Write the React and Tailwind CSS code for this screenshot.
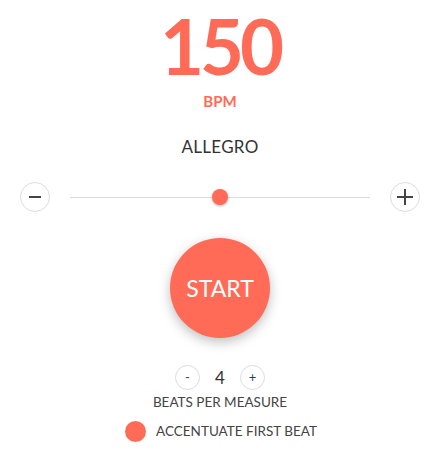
import React, { useState } from 'react';

const font = { fontFamily: '"Lato", "Open Sans", sans-serif' };

const App = () => {
  const [bpm, setBpm] = useState(150);
  const [beats, setBeats] = useState(4);
  const [accent, setAccent] = useState(true);

  const pct = ((bpm - 40) / (260 - 40)) * 100;

  return (
    <div className="w-[440px] h-[450px] bg-white flex flex-col items-center text-[#333]" style={font}>
      <div className="text-[76px] leading-[92px] font-bold text-[#ff6b57] tracking-[-4px] px-[8px]">{bpm}</div>
      <div className="text-[15px] font-bold text-[#ff6b57] leading-[18px]">BPM</div>
      <div className="mt-[27px] text-[17px] leading-[20px] tracking-[0.3px]">ALLEGRO</div>

      <div className="mt-[25px] w-full flex items-center px-[20px]">
        <button
          onClick={() => setBpm(bpm - 1)}
          className="w-[30px] h-[30px] rounded-full border border-[#ddd] flex items-center justify-center shrink-0"
        >
          <span className="w-[12px] h-[2.5px] bg-[#444]" />
        </button>
        <div className="flex-1 mx-[20px] relative h-[16px] flex items-center">
          <div className="w-full h-px bg-[#ddd]" />
          <div
            className="absolute w-[16px] h-[16px] rounded-full bg-[#ff6b57] shadow-[0_1px_3px_rgba(0,0,0,0.3)] -translate-x-1/2"
            style={{ left: `${pct}%` }}
          />
        </div>
        <button
          onClick={() => setBpm(bpm + 1)}
          className="w-[30px] h-[30px] rounded-full border border-[#ddd] flex items-center justify-center shrink-0 relative"
        >
          <span className="absolute w-[16px] h-[2.5px] bg-[#444]" />
          <span className="absolute w-[2.5px] h-[16px] bg-[#444]" />
        </button>
      </div>

      <button className="mt-[26px] w-[100px] h-[100px] rounded-full bg-[#ff6b57] text-white text-[23px] shadow-[0_4px_12px_rgba(0,0,0,0.25)]">
        START
      </button>

      <div className="mt-[27px] flex items-center">
        <button
          onClick={() => setBeats(beats - 1)}
          className="w-[25px] h-[25px] rounded-full border border-[#ddd] text-[13px] leading-none text-[#444] flex items-center justify-center"
        >
          -
        </button>
        <span className="w-[40px] text-center text-[17px] text-[#333]">{beats}</span>
        <button
          onClick={() => setBeats(beats + 1)}
          className="w-[25px] h-[25px] rounded-full border border-[#ddd] text-[13px] leading-none text-[#1e3a8a] flex items-center justify-center"
        >
          +
        </button>
      </div>
      <div className="mt-[3px] text-[13.5px] text-[#444] leading-[16px]">BEATS PER MEASURE</div>

      <div className="mt-[11px] flex items-center gap-[10px] ml-[2px]">
        <button
          onClick={() => setAccent(!accent)}
          className={'w-[21px] h-[21px] rounded-full ' + (accent ? 'bg-[#ff6b57]' : 'bg-[#ddd]')}
        />
        <span className="text-[13.5px] text-[#444]">ACCENTUATE FIRST BEAT</span>
      </div>
    </div>
  );
};

export default App;
